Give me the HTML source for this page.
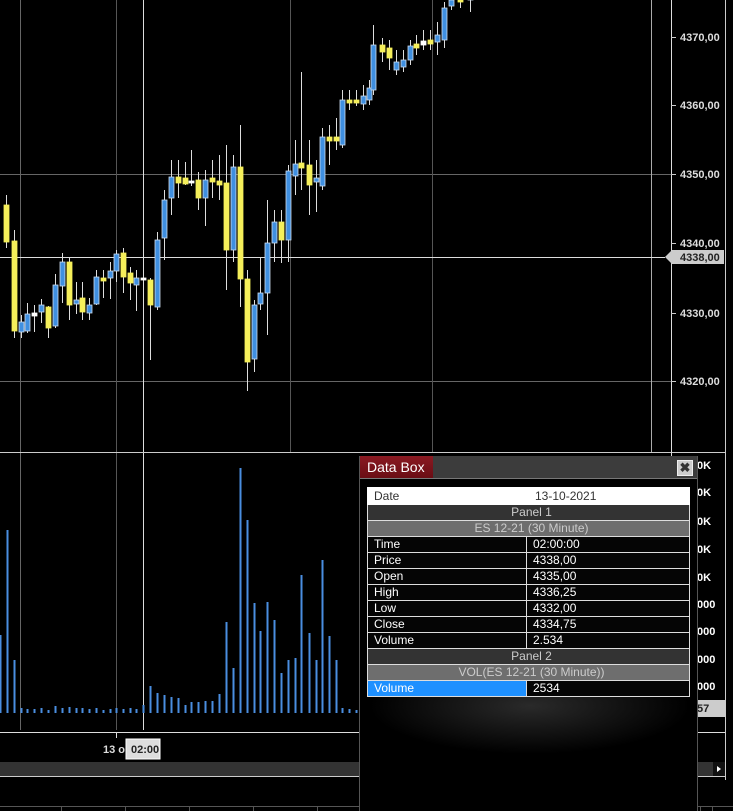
<!DOCTYPE html>
<html><head><meta charset="utf-8"><style>
html,body{margin:0;padding:0;background:#000;width:733px;height:811px;overflow:hidden;font-family:"Liberation Sans",sans-serif}
#c{position:absolute;left:0;top:0}
.db{position:absolute;left:359px;top:456px;width:337px;height:355px;background:radial-gradient(ellipse 200px 60px at 170px 250px,#2a2a2a,#000 80%);border-left:1px solid #555;border-right:1px solid #555}
.tb{position:absolute;left:0;top:0;width:337px;height:22px;background:#3c3c3c;border-bottom:1px solid #777}
.tab{position:absolute;left:0;top:0;width:73px;height:22px;background:linear-gradient(#8a1a22,#6a0d14);color:#fff;font-size:14px;line-height:22px;padding-left:7px;box-sizing:border-box}
.x{position:absolute;left:317px;top:4px;width:14px;height:14px;background:#ccc;border:1px solid #eee;color:#333;font-size:13px;line-height:14px;text-align:center;font-weight:bold}
table{position:absolute;left:7px;top:31px;width:323px;border-collapse:collapse;font-size:12px}
td{height:15px;padding:0 0 0 6px;border:1px solid #ddd;color:#fff;background:#050505;line-height:15px}
.h td{text-align:center;background:#333;color:#ccc}
.h2 td{text-align:center;background:#6e6e6e;color:#ccc}
</style></head><body>
<svg id="c" width="733" height="811"></svg>
<div class="db"><div class="tb"><div class="tab">Data Box</div><div class="x">✖</div></div>
<table>
<tr><td style="background:#fff;color:#333;border-color:#fff;width:152px;height:16px">Date</td><td style="background:#fff;color:#333;border-color:#fff;padding-left:8px">13-10-2021</td></tr>
<tr class="h"><td colspan="2">Panel 1</td></tr>
<tr class="h2"><td colspan="2">ES 12-21 (30 Minute)</td></tr>
<tr><td>Time</td><td>02:00:00</td></tr>
<tr><td>Price</td><td>4338,00</td></tr>
<tr><td>Open</td><td>4335,00</td></tr>
<tr><td>High</td><td>4336,25</td></tr>
<tr><td>Low</td><td>4332,00</td></tr>
<tr><td>Close</td><td>4334,75</td></tr>
<tr><td>Volume</td><td>2.534</td></tr>
<tr class="h"><td colspan="2">Panel 2</td></tr>
<tr class="h2"><td colspan="2">VOL(ES 12-21 (30 Minute))</td></tr>
<tr><td style="background:#1e90ff">Volume</td><td>2534</td></tr>
</table></div>
<script>
var s='';
function L(x1,y1,x2,y2,c,w){s+='<line x1="'+x1+'" y1="'+y1+'" x2="'+x2+'" y2="'+y2+'" stroke="'+c+'" stroke-width="'+(w||1)+'"/>';}
function T(x,y,t,c,a){s+='<text x="'+x+'" y="'+y+'" fill="'+(c||'#fff')+'" font-size="11" font-weight="bold" font-family="Liberation Sans" '+(a||'')+'>'+t+'</text>';}
[174,381].forEach(function(y){L(0,y+.5,671,y+.5,'#666');});
[290.5,432.5].forEach(function(x){L(x,0,x,452,'#555');});
L(20.5,0,20.5,730,'#666');L(116.5,0,116.5,730,'#555');
L(651.5,0,651.5,452,'#aaa');
L(143.5,0,143.5,730,'#ddd');
L(0,257.5,665,257.5,'#ddd');
L(0,452.5,725,452.5,'#ccc');
L(671.5,0,671.5,730,'#ddd');
L(725.5,0,725.5,780,'#ccc');
[[37,'4370,00'],[105,'4360,00'],[174,'4350,00'],[243,'4340,00'],[313,'4330,00'],[381,'4320,00']].forEach(function(p){L(671,p[0]+.5,676,p[0]+.5,'#ccc');T(680,p[0]+4,p[1],'#ddd','font-size="10"');});
s+='<polygon points="665,257 672,250 724,250 724,264 672,264" fill="#ccc"/>';T(680,261,'4338,00','#222','font-weight="normal" font-size="10"');
var C=[[6,205,242,195,248,'y'],[14,241,331,230,338,'y'],[21,322,332,315,338,'b'],[27,314,331,303,333,'b'],[34,313,316,305,332,'w'],[41,305,312,299,323,'b'],[48,307,328,306,338,'y'],[55,285,326,274,328,'b'],[62,262,286,253,303,'b'],[69,262,305,258,320,'y'],[76,300,304,282,314,'b'],[82,298,312,282,320,'y'],[89,305,313,298,320,'b'],[96,277,304,270,305,'b'],[103,278,281,270,298,'y'],[110,271,278,262,299,'b'],[116,254,271,250,282,'b'],[123,253,277,248,293,'y'],[130,273,283,267,300,'y'],[136,278,285,270,311,'b'],[143,278,280,277,290,'w'],[150,280,305,278,360,'y'],[157,240,307,232,310,'b'],[164,200,238,190,260,'b'],[171,177,198,160,215,'b'],[178,177,183,160,198,'y'],[185,178,184,162,185,'y'],[191,181,183,150,186,'w'],[198,180,198,172,210,'y'],[205,180,198,170,226,'b'],[212,178,182,160,198,'y'],[219,181,185,155,200,'y'],[226,183,250,145,290,'y'],[233,167,250,155,262,'b'],[240,167,279,125,307,'y'],[247,279,362,270,391,'y'],[254,305,359,300,372,'b'],[260,293,304,258,310,'b'],[267,243,293,200,335,'b'],[274,222,243,210,262,'b'],[281,222,240,210,263,'y'],[288,171,240,165,262,'b'],[295,164,176,140,195,'b'],[301,163,168,72,190,'y'],[309,165,185,140,215,'y'],[316,178,182,160,212,'b'],[322,137,186,128,190,'b'],[329,137,141,125,165,'y'],[336,137,141,118,150,'y'],[342,100,145,90,148,'b'],[349,100,103,90,110,'y'],[356,100,103,90,106,'y'],[363,96,104,85,110,'b'],[369,88,100,80,105,'b'],[373,45,90,25,95,'b'],[382,45,52,38,62,'y'],[389,48,58,40,70,'y'],[396,62,70,50,75,'b'],[403,60,67,50,72,'b'],[410,46,60,40,65,'b'],[416,44,48,35,55,'y'],[423,41,45,30,50,'w'],[430,40,44,30,50,'y'],[437,35,42,22,55,'b'],[444,8,40,2,48,'b'],[451,0,6,0,10,'b'],[460,-5,2,-5,8,'y'],[470,-5,0,-5,12,'b']];
C.forEach(function(c){L(c[0]+.5,c[3],c[0]+.5,c[4],'#ddd');var f=c[5]=='y'?'#f5ef5a':c[5]=='b'?'#3f8fe0':'#fff';var st=c[5]=='b'?'#cde':'#f5ef5a';if(c[5]=='w')st='#fff';s+='<rect x="'+(c[0]-2)+'" y="'+c[1]+'" width="5" height="'+Math.max(1,c[2]-c[1])+'" fill="'+f+'" stroke="'+st+'" stroke-width="0.8"/>';});
var V=[[0,635],[7,530],[14,660],[21,708],[27,709],[34,709],[41,708],[48,710],[55,706],[62,708],[69,707],[76,708],[82,708],[89,709],[96,708],[103,710],[110,709],[116,708],[123,709],[130,708],[136,709],[143,705],[150,686],[157,693],[164,695],[171,697],[178,698],[185,705],[191,702],[198,702],[205,701],[212,701],[219,694],[226,622],[233,668],[240,468],[247,520],[254,603],[260,631],[267,602],[274,620],[281,673],[288,660],[295,658],[301,575],[309,633],[316,660],[322,560],[329,636],[336,660],[342,708],[349,709],[356,710]];
V.forEach(function(v){L(v[0]+.5,v[1],v[0]+.5,713,'#4a8ee0',2);});
[465,492,521,549,577].forEach(function(y){T(697,y+4,'0K');});
[604,631,659,686].forEach(function(y){T(697,y+4,'000');});
s+='<rect x="690" y="700" width="35" height="17" fill="#ccc"/>';T(697,712,'57','#222','font-weight="normal"');
L(0,732.5,725,732.5,'#ddd');L(116.5,732,116.5,738,'#ddd');
T(103,753,'13 ok','#ddd');
s+='<rect x="126" y="739" width="34" height="20" fill="#ddd" stroke="#fff"/>';T(131,753,'02:00','#222','font-weight="normal"');
s+='<rect x="0" y="762" width="725" height="14" fill="#333"/>';L(0,776.5,725,776.5,'#ccc');
s+='<rect x="713" y="762" width="12" height="14" fill="#111"/><polygon points="717,766 721,769 717,772" fill="#fff"/>';
L(0,806.5,733,806.5,'#555');[61,125,189,253,317,700,712].forEach(function(x){L(x+.5,807,x+.5,811,'#555');});
document.getElementById('c').innerHTML=s;
</script>
</body></html>
